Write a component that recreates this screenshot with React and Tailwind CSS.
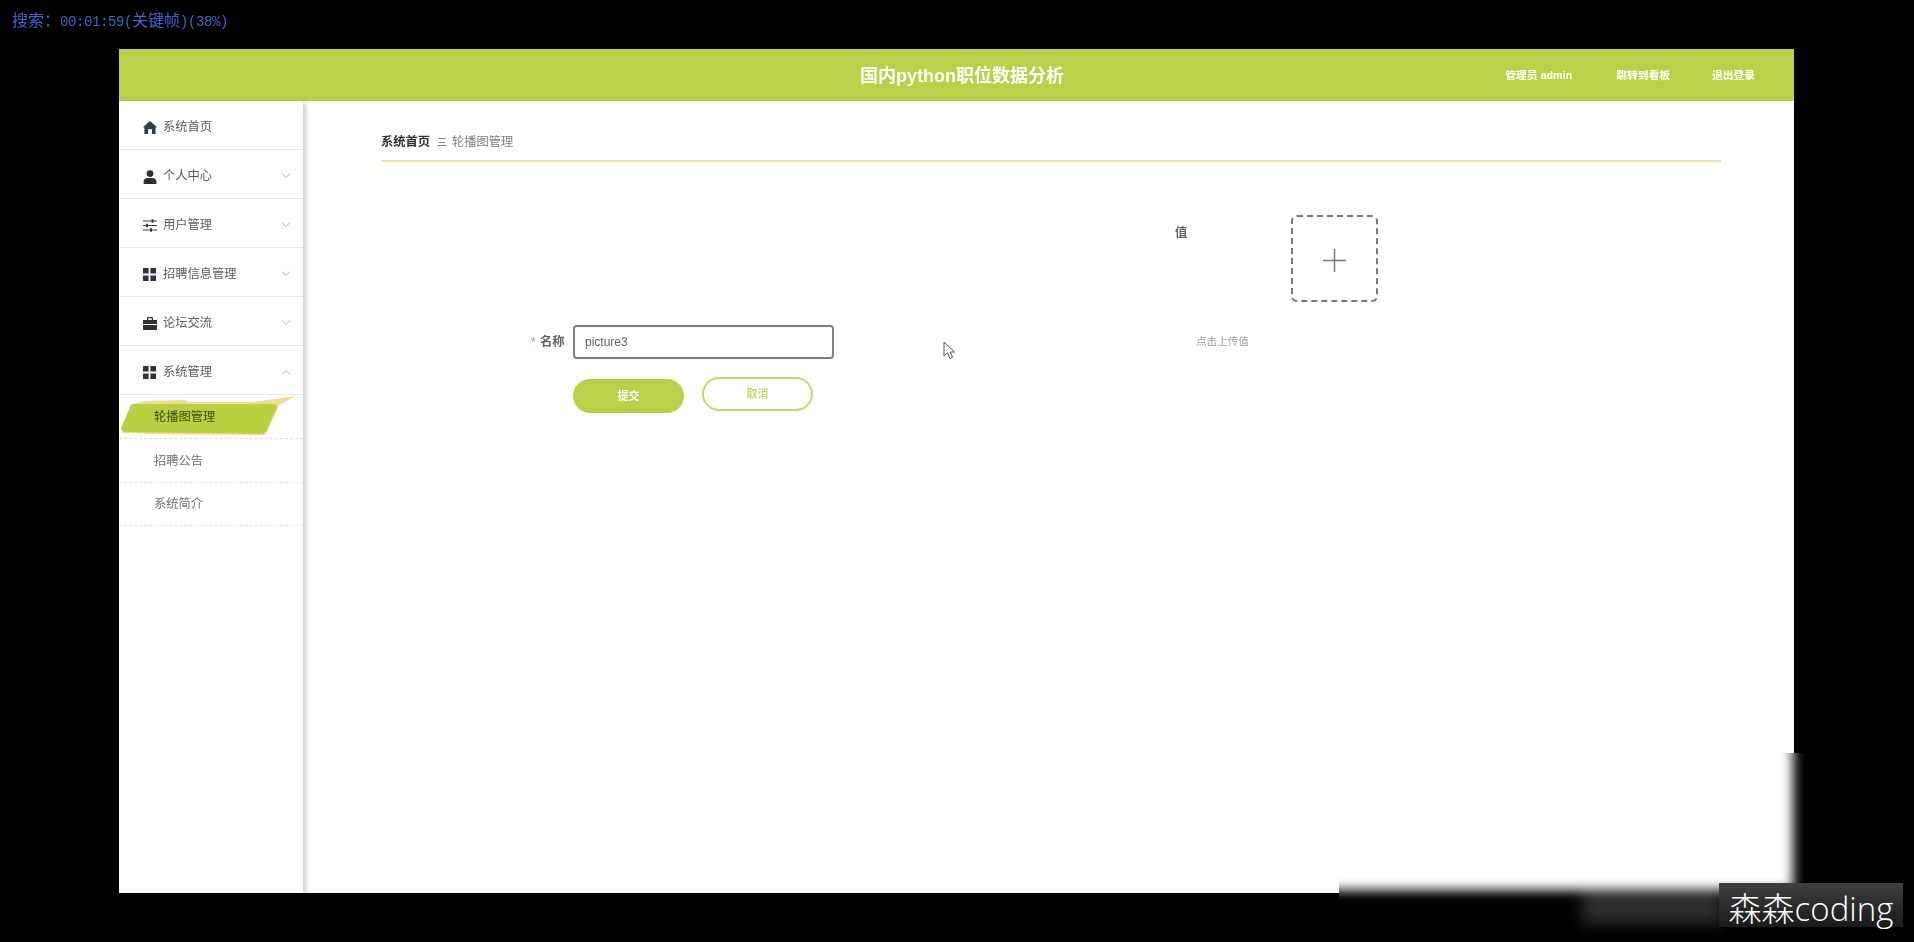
import React from "react";

const Chevron = ({ up }) => (
  <svg width="10" height="6" viewBox="0 0 10 6" fill="none" stroke="#a8abb2" strokeWidth="1" className="ml-auto mr-[12px] mb-[2px]">
    <path d={up ? "M1 5.5 5 1.5 9 5.5" : "M1 .5 5 4.5 9 .5"} />
  </svg>
);

const Home = () => (
  <svg width="14" height="13" viewBox="0 0 14 13" fill="#2f3a4a"><path d="M7 0 14 6.2 12.6 6.6V13H9V8.2H5V13H1.4V6.6L0 6.2Z" /></svg>
);
const User = () => (
  <svg width="14" height="14" viewBox="0 0 14 14" fill="#2b2f3a"><circle cx="7" cy="3.6" r="3.4" /><path d="M.6 14V11.4C.6 9.2 2.4 7.9 4.4 7.9H9.6C11.6 7.9 13.4 9.2 13.4 11.4V14Z" /></svg>
);
const Sliders = () => (
  <svg width="14" height="13" viewBox="0 0 14 13" fill="#2f3a4a">
    <rect x="0" y="1.5" width="14" height="1" /><rect x="0" y="6" width="14" height="1" /><rect x="0" y="10.5" width="14" height="1" />
    <rect x="8.5" y="0.3" width="2" height="3.4" /><rect x="3" y="4.8" width="2" height="3.4" /><rect x="7" y="9.3" width="2" height="3.4" />
  </svg>
);
const Grid = () => (
  <svg width="13" height="13" viewBox="0 0 13 13" fill="#2b3340">
    <rect width="5.6" height="5.6" rx=".5" /><rect x="7.4" width="5.6" height="5.6" rx=".5" /><rect y="7.4" width="5.6" height="5.6" rx=".5" /><rect x="7.4" y="7.4" width="5.6" height="5.6" rx=".5" />
  </svg>
);
const Case = () => (
  <svg width="14" height="13" viewBox="0 0 14 13" fill="#2b2f3a">
    <path d="M4 3V1.2C4 .6 4.5 0 5.2 0H8.8C9.5 0 10 .6 10 1.2V3H8.8V1.3H5.2V3Z" /><path d="M0 3H14V7H0Z" /><path d="M0 8H14V13H0Z" />
  </svg>
);

const menu = [
  { icon: <Home />, label: "系统首页" },
  { icon: <User />, label: "个人中心", chevron: true },
  { icon: <Sliders />, label: "用户管理", chevron: true },
  { icon: <Grid />, label: "招聘信息管理", chevron: true },
  { icon: <Case />, label: "论坛交流", chevron: true },
  { icon: <Grid />, label: "系统管理", chevron: true, up: true },
];

const Row = ({ icon, label, chevron, up }) => (
  <div className="h-[49px] border-b border-[#e4e6ea] flex items-center pl-[24px] pt-[5px] text-[12.25px] text-[#555a60]">
    <span className="w-[20px] flex items-center">{icon}</span>
    <span>{label}</span>
    {chevron && <Chevron up={up} />}
  </div>
);

const Brush = () => (
  <svg width="184" height="44" viewBox="0 0 184 44" className="absolute left-0 top-0 blur-[0.7px]">
    <path d="M12 9 27 6 65 5 70 7 133 7 177 1 160 10 155 22 146 40 60 39.5 3 38Z" fill="#f9d891" />
    <path d="M16 9H154Q159 9 157.5 13L147.5 36Q146 39 142 39L6 37Q1 37 2.5 32L11 12Q12.5 9 16 9Z" fill="#b9d03f" />
  </svg>
);

export default function App() {
  return (
    <div className="relative w-[1914px] h-[942px] bg-black overflow-hidden font-['Liberation_Sans','Noto_Sans_CJK_SC',sans-serif]">
      <div className="h-[49px] pl-[12px] pt-[12px] leading-[18px] text-[#3f66cc] blur-[0.3px] whitespace-nowrap">
        <span className="text-[16px]">搜索：</span>
        <span className="text-[14px] tracking-[-0.4px] font-['Liberation_Mono',monospace]">00:01:59(</span>
        <span className="text-[16px]">关键帧</span>
        <span className="text-[14px] tracking-[-0.4px] font-['Liberation_Mono',monospace]">)(38%)</span>
      </div>

      <div className="ml-[119px] w-[1675px] h-[844px] bg-white flex flex-col blur-[0.5px]">
        <header className="h-[52px] shrink-0 bg-[#b9d048] flex items-center text-white">
          <div className="ml-[741px] pt-[2px] text-[18px] font-bold whitespace-nowrap">国内python职位数据分析</div>
          <nav className="ml-auto mr-[39px] flex items-center gap-[42px] text-[10.75px] font-bold whitespace-nowrap">
            <span className="mr-[2px]">管理员 admin</span>
            <span>跳转到看板</span>
            <span>退出登录</span>
          </nav>
        </header>

        <div className="flex flex-1 min-h-0">
          <aside className="w-[184px] shrink-0 bg-white shadow-[3px_2px_5px_rgba(0,0,0,0.2)]">
            {menu.map((m) => (
              <Row key={m.label} {...m} />
            ))}
            <div className="relative h-[44px] border-b border-dashed border-[#e2dcdc] flex items-center pl-[35px] pt-[1px] text-[12.25px] text-[#3c4a12]">
              <Brush />
              <span className="relative">轮播图管理</span>
            </div>
            <div className="h-[44px] border-b border-dashed border-[#e4e4e4] flex items-center pl-[35px] pt-[1px] text-[12.25px] text-[#6b6f75]">招聘公告</div>
            <div className="h-[43px] border-b border-dashed border-[#e4e4e4] flex items-center pl-[35px] pt-[1px] text-[12.25px] text-[#6b6f75]">系统简介</div>
          </aside>

          <main className="flex-1 pl-[78px] pr-[73px]">
            <div className="h-[61px] border-b-2 border-[#ebe4a0] flex items-center pt-[24px] text-[12.25px] whitespace-nowrap">
              <span className="font-bold text-[#303133]">系统首页</span>
              <span className="ml-[7px] w-[10px] text-[#555] text-[10px]">三</span>
              <span className="ml-[5px] text-[#7a7d82]">轮播图管理</span>
            </div>

            <form>
              <div className="mt-[53px] h-[86px] flex items-start">
                <label className="ml-[794px] mt-[10px] leading-[16px] text-[12.25px] font-bold text-[#606266]">值</label>
                <div className="ml-[104px] w-[87px] h-[87px] rounded-[6px] border-2 border-dashed border-[#777] flex items-center justify-center">
                  <svg width="23" height="23" viewBox="0 0 23 23" stroke="#7a7a7a" strokeWidth="1.5" className="mt-[3px]"><path d="M0 11.5H23M11.5 0V23" /></svg>
                </div>
              </div>

              <div className="mt-[24px] h-[34px] flex items-center">
                <span className="ml-[150px] w-[9px] text-[12px] text-[#f56c6c]">*</span>
                <label className="w-[33px] text-[12.25px] font-bold text-[#606266]">名称</label>
                <div className="w-[261px] h-[34px] rounded-[4px] border-2 border-[#808080] flex items-center pl-[10px] text-[12px] text-[#606266]">picture3</div>
                <span className="ml-[362px] text-[10.6px] text-[#9a9ca3]">点击上传值</span>
              </div>

              <div className="mt-[18px] ml-[192px] flex items-start gap-[18px]">
                <button type="button" className="mt-[2px] w-[111px] h-[34px] rounded-full bg-[#b9d048] text-white text-[11px] font-bold">提交</button>
                <button type="button" className="w-[111px] h-[34px] rounded-full border-2 border-[#c7d96e] bg-white text-[#c5d96b] text-[11px] font-bold">取消</button>
              </div>
            </form>
          </main>
        </div>
      </div>

      <svg width="14" height="19" viewBox="0 0 14 19" className="absolute left-[943px] top-[341px]" fill="#fff" stroke="#555" strokeWidth="1">
        <path d="M1 1V15L4.5 11.8 7 17.5 9.5 16.3 7.2 11H11.5Z" />
      </svg>

      <div className="absolute left-[1339px] top-[753px] w-[575px] h-[189px] overflow-hidden bg-black">
        <div className="absolute left-[243px] top-[135px] w-[140px] h-[36px] bg-[#2e2e2e] blur-[8px]" />
        <div className="absolute -left-[60px] -top-[60px] w-[514px] h-[197px] bg-white blur-[6px]" />
      </div>
      <div className="absolute left-[1719px] top-[883px] w-[184px] h-[44px] pt-[6px] bg-gradient-to-b from-[#404040] to-[#1a1a1a] flex items-center justify-center text-[33px] leading-none text-white font-light font-['Open_Sans','Noto_Sans_CJK_SC',sans-serif] whitespace-nowrap">
        森森coding
      </div>
    </div>
  );
}
